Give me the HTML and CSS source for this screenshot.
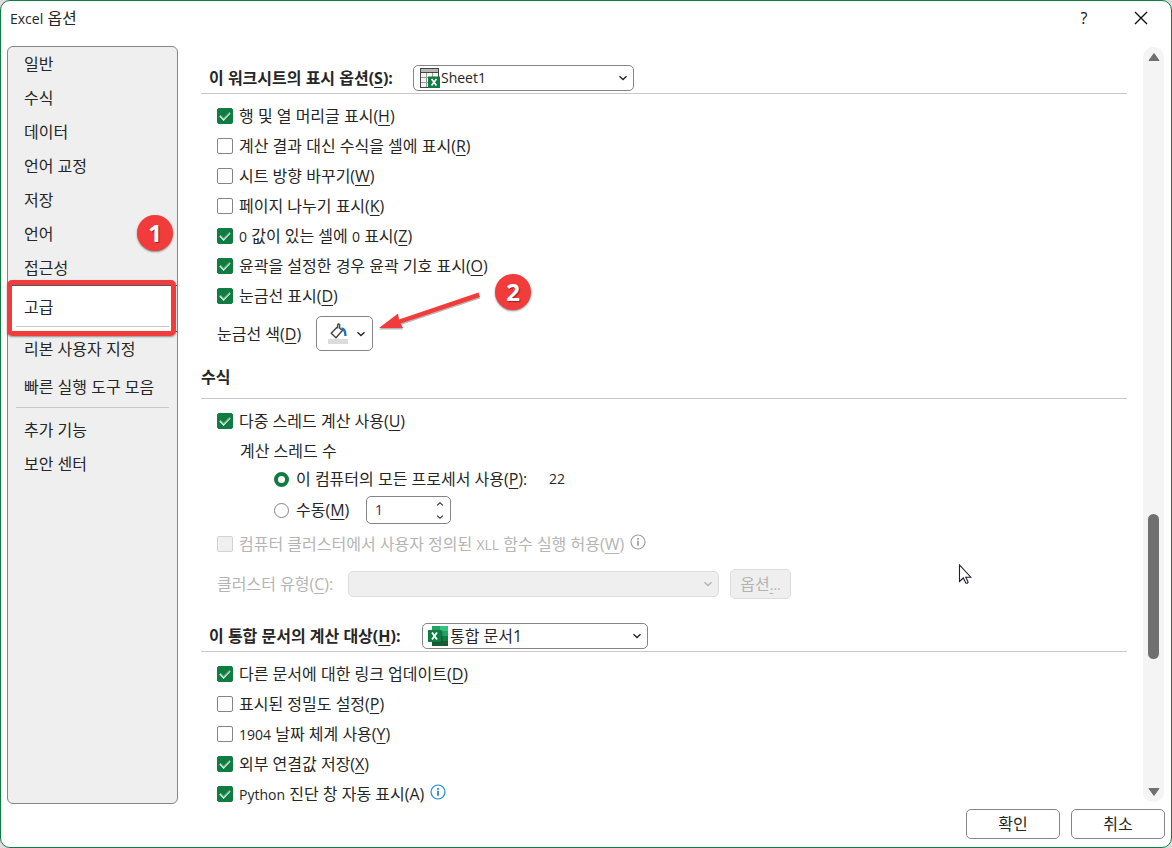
FILE: index.html
```html
<!DOCTYPE html>
<html lang="ko">
<head>
<meta charset="utf-8">
<title>Excel 옵션</title>
<link rel="stylesheet" href="styles.css">
</head>
<body>
<svg class="defs" aria-hidden="true">
  <symbol id="chevron" viewBox="0 0 10 10"><path d="M1.5 3.2 5 6.6 8.5 3.2" fill="none" stroke="currentColor" stroke-width="1.4"/></symbol>
  <symbol id="info" viewBox="0 0 16 16"><circle cx="8" cy="8" r="7" fill="none" stroke="currentColor" stroke-width="1.2"/><path d="M8 6.8v5M8 4v1.7" stroke="currentColor" stroke-width="1.8"/></symbol>
</svg>
<div class="dialog">
  <header class="titlebar">
    <h1 class="title"><span class="latin">Excel</span> 옵션</h1>
    <button class="title-button" type="button" aria-label="도움말">?</button>
    <button class="title-button" type="button" aria-label="닫기"><svg width="14" height="14" viewBox="0 0 14 14"><path d="M1 1 13 13M13 1 1 13" stroke="#111" stroke-width="1.4"/></svg></button>
  </header>

  <div class="main">
    <nav class="sidebar">
      <a class="item" href="#general">일반</a>
      <a class="item" href="#formulas">수식</a>
      <a class="item" href="#data">데이터</a>
      <a class="item" href="#proofing">언어 교정</a>
      <a class="item" href="#save">저장</a>
      <a class="item has-badge" href="#language">언어<span class="badge badge-one">1</span></a>
      <a class="item" href="#accessibility">접근성</a>
      <a class="item selected" href="#advanced" aria-current="page">고급</a>
      <a class="item" href="#ribbon">리본 사용자 지정</a>
      <a class="item toolbar-item" href="#toolbar">빠른 실행 도구 모음</a>
      <hr class="divider">
      <a class="item" href="#addins">추가 기능</a>
      <a class="item" href="#trust">보안 센터</a>
    </nav>

    <main class="content">
      <section>
        <div class="heading">
          <label class="heading-label" for="sheet">이 워크시트의 표시 옵션<span class="key">(<u>S</u>):</span></label>
          <div class="combo combo-sheet">
            <select id="sheet" class="latin"><option>Sheet1</option></select>
            <svg class="combo-icon" width="22" height="20" viewBox="0 0 22 20">
              <path d="M1.500 1h18v18h-18z" fill="#f4f4f4"/>
              <path d="M1.500 1h18v3h-18z" fill="#b8b8b8"/>
              <path d="M2 9.500h17M2 14.500h8M7.500 5v14M13.500 5v5" stroke="#999" fill="none"/>
              <path d="M1 .5h19M1 4.500h19M1.500 0v20M19.500 0v9M1 19.500h9" stroke="#444" fill="none"/>
              <path d="M9 8.500h12V20H9z" fill="#107c41"/>
              <path d="m12.600 11 4.800 6.500m0-6.500-4.800 6.500" stroke="#fff" stroke-width="1.600"/>
            </svg>
            <svg class="combo-arrow" width="10" height="10"><use href="#chevron"/></svg>
          </div>
        </div>
        <div class="rows">
          <label class="row"><input type="checkbox" checked><span>행 및 열 머리글 표시<span class="key">(<u>H</u>)</span></span></label>
          <label class="row"><input type="checkbox"><span>계산 결과 대신 수식을 셀에 표시<span class="key">(<u>R</u>)</span></span></label>
          <label class="row"><input type="checkbox"><span>시트 방향 바꾸기<span class="key">(<u>W</u>)</span></span></label>
          <label class="row"><input type="checkbox"><span>페이지 나누기 표시<span class="key">(<u>K</u>)</span></span></label>
          <label class="row"><input type="checkbox" checked><span><span class="latin">0</span> 값이 있는 셀에 <span class="latin">0</span> 표시<span class="key">(<u>Z</u>)</span></span></label>
          <label class="row"><input type="checkbox" checked><span>윤곽을 설정한 경우 윤곽 기호 표시<span class="key">(<u>O</u>)</span></span></label>
          <label class="row"><input type="checkbox" checked><span>눈금선 표시<span class="key">(<u>D</u>)</span></span></label>
          <div class="row color-row">
            <label class="color-label" for="color">눈금선 색<span class="key">(<u>D</u>)</span></label>
            <button class="color-button" id="color" type="button" aria-label="눈금선 색">
              <svg width="20" height="22" viewBox="0 0 20 22">
                <path d="M0 16h20v5H0z" fill="#dcdcdc"/>
                <path d="M9 4.200 3.200 10.300l4.800 4.400 6.400-7.200-2.800-2.600V1.500q-1.500-1.200-2 .5v3.600" fill="#fff" stroke="#444" stroke-width="1.400" stroke-linejoin="round"/>
                <path d="M13.500 5.500q4 .5 4 7.500" fill="none" stroke="#1a73c4" stroke-width="2.400"/>
              </svg>
              <svg width="10" height="10"><use href="#chevron"/></svg>
            </button>
          </div>
        </div>
      </section>

      <section>
        <h2 class="heading heading-plain">수식</h2>
        <div class="rows">
          <label class="row"><input type="checkbox" checked><span>다중 스레드 계산 사용<span class="key">(<u>U</u>)</span></span></label>
          <div class="row row-indent">계산 스레드 수</div>
          <div class="row radio-row">
            <label class="radio-label all-label"><input type="radio" name="threads" checked><span>이 컴퓨터의 모든 프로세서 사용<span class="key">(<u>P</u>):</span></span></label>
            <span class="latin">22</span>
          </div>
          <div class="row radio-row manual-row">
            <label class="radio-label manual-label"><input type="radio" name="threads"><span>수동<span class="key">(<u>M</u>)</span></span></label>
            <div class="spinner">
              <input class="spinner-input latin" type="text" value="1" aria-label="스레드 수">
              <div class="spinner-buttons">
                <button type="button" aria-label="늘리기"><svg class="flip" width="8" height="8"><use href="#chevron"/></svg></button>
                <button type="button" aria-label="줄이기"><svg width="8" height="8"><use href="#chevron"/></svg></button>
              </div>
            </div>
          </div>
          <div class="row disabled xll-row">
            <input type="checkbox" id="xll" disabled>
            <label for="xll">컴퓨터 클러스터에서 사용자 정의된 <span class="latin">XLL</span> 함수 실행 허용<span class="key">(<u>W</u>)</span></label>
            <svg class="info info-muted" width="16" height="16"><use href="#info"/></svg>
          </div>
          <div class="row disabled cluster-row">
            <label class="cluster-label" for="cluster">클러스터 유형<span class="key">(<u>C</u>):</span></label>
            <div class="combo combo-cluster">
              <select id="cluster" disabled><option></option></select>
              <svg class="combo-arrow" width="10" height="10"><use href="#chevron"/></svg>
            </div>
            <button class="button option-button" type="button" disabled>옵션<span class="latin"><u>.</u>..</span></button>
          </div>
        </div>
      </section>

      <section>
        <div class="heading heading-book">
          <label class="heading-label book-label" for="book">이 통합 문서의 계산 대상<span class="key">(<u>H</u>):</span></label>
          <div class="combo combo-book">
            <select id="book"><option>통합 문서1</option></select>
            <svg class="combo-icon" width="20" height="20" viewBox="0 0 20 20">
              <path d="M4 0h16v20H4z" fill="#21a366"/>
              <path d="M12 0h8v5h-8z" fill="#33c481"/>
              <path d="M4 5h8v5H4z" fill="#107c41"/>
              <path d="M4 10h16v5H4z" fill="#107c41"/>
              <path d="M4 15h16v5H4z" fill="#185c37"/>
              <path d="M4 4.500h10.500v12.500H4z" fill="#0b4a28" opacity=".5"/>
              <path d="M0 4h13v12H0z" fill="#107c41"/>
              <path d="m4 6.500 5 7m0-7-5 7" stroke="#fff" stroke-width="1.800"/>
            </svg>
            <svg class="combo-arrow" width="10" height="10"><use href="#chevron"/></svg>
          </div>
        </div>
        <div class="rows">
          <label class="row"><input type="checkbox" checked><span>다른 문서에 대한 링크 업데이트<span class="key">(<u>D</u>)</span></span></label>
          <label class="row"><input type="checkbox"><span>표시된 정밀도 설정<span class="key">(<u>P</u>)</span></span></label>
          <label class="row"><input type="checkbox"><span><span class="latin">1904</span> 날짜 체계 사용<span class="key">(<u>Y</u>)</span></span></label>
          <label class="row"><input type="checkbox" checked><span>외부 연결값 저장<span class="key">(<u>X</u>)</span></span></label>
          <div class="row">
            <input type="checkbox" id="python" checked>
            <label for="python"><span class="latin">Python</span> 진단 창 자동 표시<span class="key">(A)</span></label>
            <svg class="info" width="16" height="16"><use href="#info"/></svg>
          </div>
        </div>
      </section>
    </main>

    <div class="scrollbar">
      <svg width="12" height="10" viewBox="0 0 12 10"><path d="M6 1.500 11 8.500H1z" fill="#707070" stroke="#707070" stroke-linejoin="round"/></svg>
      <div class="track"><div class="thumb"></div></div>
      <svg width="12" height="10" viewBox="0 0 12 10"><path d="M6 8.500 11 1.500H1z" fill="#707070" stroke="#707070" stroke-linejoin="round"/></svg>
    </div>
  </div>

  <footer class="footer">
    <button class="button" type="button">확인</button>
    <button class="button" type="button">취소</button>
  </footer>

  <svg class="arrow" width="106" height="44" viewBox="0 0 106 44">
    <path d="M1 38 20 23.500l1 6L100.500 2.500 102 7 22.500 33.500 25 38z" fill="#888" opacity=".6" transform="translate(0 1.500)"/>
    <path d="M1 38 20 23.500l1 6L100.500 2.500 102 7 22.500 33.500 25 38z" fill="#f23c3c"/>
  </svg>
  <span class="badge badge-two">2</span>
  <svg class="cursor" width="14" height="21" viewBox="0 0 14 21"><path d="M1.500 1v16.500l3.800-3.500 2.500 5q1.800.8 2.300-1L7.800 13.200h5z" fill="#fff" stroke="#1c1c2c" stroke-width="1.100"/></svg>
</div>
</body>
</html>
```
FILE: styles.css
```css
* { box-sizing: border-box; }

body {
  margin: 0;
  background: #dcdcdc;
  color: #262626;
  font: 16px/20px "Open Sans", "Noto Sans CJK KR", sans-serif;
}

button, input, select { font: inherit; color: inherit; margin: 0; }
u { text-underline-offset: 3px; text-decoration-thickness: 1px; }
svg { display: block; flex: none; }

.defs { position: absolute; width: 0; height: 0; }
.latin { font-size: 14px; }
.key { font-size: 16px; }

.dialog {
  position: relative;
  display: flex;
  flex-direction: column;
  height: 100vh;
  min-height: 600px;
  border: 1px solid #107c41;
  border-radius: 10px;
  background: #fff;
}

/* Title bar */
.titlebar { display: flex; align-items: center; height: 34px; padding: 0 8px 0 9px; flex: none; }
.title { flex: 1; margin: 0; font-size: 16px; font-weight: 400; }
.title-button {
  display: flex;
  align-items: center;
  justify-content: center;
  width: 44px;
  height: 30px;
  margin-left: 13px;
  padding: 0;
  border: 0;
  background: none;
  color: #111;
}

.main { display: flex; flex: 1; min-height: 0; padding: 11px 7px 0 6px; }

/* Category list */
.sidebar {
  flex: none;
  width: 171px;
  border: 1px solid #858585;
  border-radius: 6px;
  background: #efefef;
}
.item {
  display: flex;
  align-items: center;
  height: 34px;
  padding-left: 16px;
  color: inherit;
  text-decoration: none;
}
.has-badge { position: relative; }
.selected {
  position: relative;
  height: 47px;
  padding-bottom: 3px;
  border: solid #555;
  border-width: 1px 0;
  background: #fff;
}
.selected::before {
  content: "";
  position: absolute;
  inset: auto 8px 4px;
  height: 1px;
  background: #c6c6c6;
}
.selected::after {
  content: "";
  position: absolute;
  inset: -6px 1px -5px -1px;
  border: 5px solid #f23c3c;
  border-radius: 5px;
  box-shadow: 0 1px 2px #0006;
}
.toolbar-item { margin-top: 4px; }
.divider { height: 1px; margin: 3px 8px 5px; border: 0; background: #c6c6c6; }

/* Option panel */
.content { flex: 1; min-width: 0; padding: 10px 0 0 23px; overflow: hidden; }
.heading {
  display: flex;
  align-items: center;
  height: 38px;
  padding: 6px 0 0 8px;
  margin: 0;
  border-bottom: 1px solid #c8c8c8;
  font-size: 16px;
  font-weight: 700;
}
.heading-label { width: 204px; }
.book-label { width: 213px; }
.heading-plain { height: 43px; padding: 0; }
.heading-book { margin-top: 15px; }
.rows { padding: 7px 0 0 16px; }
.row { display: flex; align-items: center; height: 30px; white-space: nowrap; }
.row > input { margin-right: 6px; }
.row-indent { height: 29px; padding-left: 23px; }
.color-row { height: 45px; }
.color-label { width: 99px; }
.radio-row { height: 28px; padding-left: 57px; }
.radio-label { display: flex; align-items: center; gap: 7px; }
.manual-row { height: 32px; padding-top: 2px; }
.all-label { width: 275px; }
.manual-label { width: 92px; }
.xll-row { margin-top: 4px; }
.cluster-row { margin-top: 10px; }
.cluster-label { width: 131px; }
.disabled { color: #b4b4b4; }

input[type="checkbox"], input[type="radio"] {
  appearance: none;
  flex: none;
  display: grid;
  place-items: center;
  width: 16px;
  height: 16px;
  border: 1px solid #858585;
  border-radius: 2px;
  background: #fff;
}
input[type="checkbox"]:checked { border-color: #107c41; background: #107c41; }
input[type="checkbox"]:checked::before {
  content: "";
  width: 9px;
  height: 5px;
  margin-bottom: 3px;
  border: solid #fff;
  border-width: 0 0 1px 1px;
  box-shadow: inset 1px -1px #fff6;
  transform: rotate(-45deg);
}
input[type="checkbox"]:disabled { border-color: #d2d2d2; background: #efefef; }
input[type="radio"] { width: 15px; height: 15px; border-radius: 50%; }
input[type="radio"]:checked { border: 4px solid #107c41; }

.combo { display: grid; align-items: center; flex: none; height: 26px; }
.combo > * { grid-area: 1 / 1; }
.combo select {
  appearance: none;
  width: 100%;
  height: 26px;
  padding: 0 24px 0 27px;
  border: 1px solid #858585;
  border-radius: 5px;
  background: #fff;
  font-weight: 400;
}
.combo select.latin { font-size: 14px; }
.combo select:disabled { border-color: #dcdcdc; background: #efefef; opacity: 1; }
.combo-sheet { width: 221px; }
.combo-book { width: 226px; }
.combo-cluster { width: 371px; }
.combo-icon { margin-left: 6px; pointer-events: none; }
.combo-arrow { justify-self: end; margin-right: 6px; pointer-events: none; }

.color-button {
  display: flex;
  align-items: center;
  justify-content: space-between;
  width: 57px;
  height: 35px;
  padding: 0 6px 0 11px;
  border: 1px solid #858585;
  border-radius: 5px;
  background: #fff;
}

.spinner {
  display: flex;
  width: 85px;
  height: 28px;
  border: 1px solid #858585;
  border-radius: 5px;
}
.spinner-input {
  flex: 1;
  min-width: 0;
  padding: 0 8px;
  border: 0;
  background: none;
  color: #5c1a45;
}
.spinner-input.latin { font-size: 14px; }
.spinner-buttons { display: flex; flex-direction: column; width: 21px; }
.spinner-buttons button {
  display: flex;
  align-items: center;
  justify-content: center;
  flex: 1;
  padding: 0;
  border: 0;
  background: none;
}
.flip { transform: rotate(180deg); }

.info { margin: 0 0 4px 6px; color: #1e88d2; }
.info-muted { color: #a0a0a0; }

.button {
  width: 94px;
  height: 30px;
  padding: 0;
  border: 1px solid #858585;
  border-radius: 5px;
  background: #fff;
}
.option-button { width: 61px; margin-left: 11px; border-color: #dcdcdc; background: #efefef; }

/* Scroll bar */
.scrollbar {
  display: flex;
  flex-direction: column;
  align-items: center;
  flex: none;
  width: 21px;
  margin: 1px 0 2px 16px;
  padding: 5px 0;
  border-radius: 10px;
  background: #f4f4f4;
}
.track { display: flex; flex-direction: column; flex: 1; padding: 452px 0 128px; }
.thumb { flex: 1; width: 11px; border-radius: 6px; background: #707070; }

.footer { display: flex; justify-content: flex-end; gap: 11px; padding: 5px 6px 8px; flex: none; }

/* Callouts and pointer lying over the dialog */
.badge {
  position: absolute;
  display: flex;
  align-items: center;
  justify-content: center;
  width: 36px;
  height: 36px;
  border-radius: 50%;
  background: #f23c3c;
  box-shadow: 0 1px 2px #0007;
  color: #fff;
  font-size: 24px;
  font-weight: 700;
  text-shadow: 1px 1px 1px #0006;
}
.badge-one { top: -2px; right: 4px; }
.badge-two { left: 494px; top: 273px; }
.arrow { position: absolute; left: 377px; top: 289px; }
.cursor { position: absolute; left: 957px; top: 563px; }
```
